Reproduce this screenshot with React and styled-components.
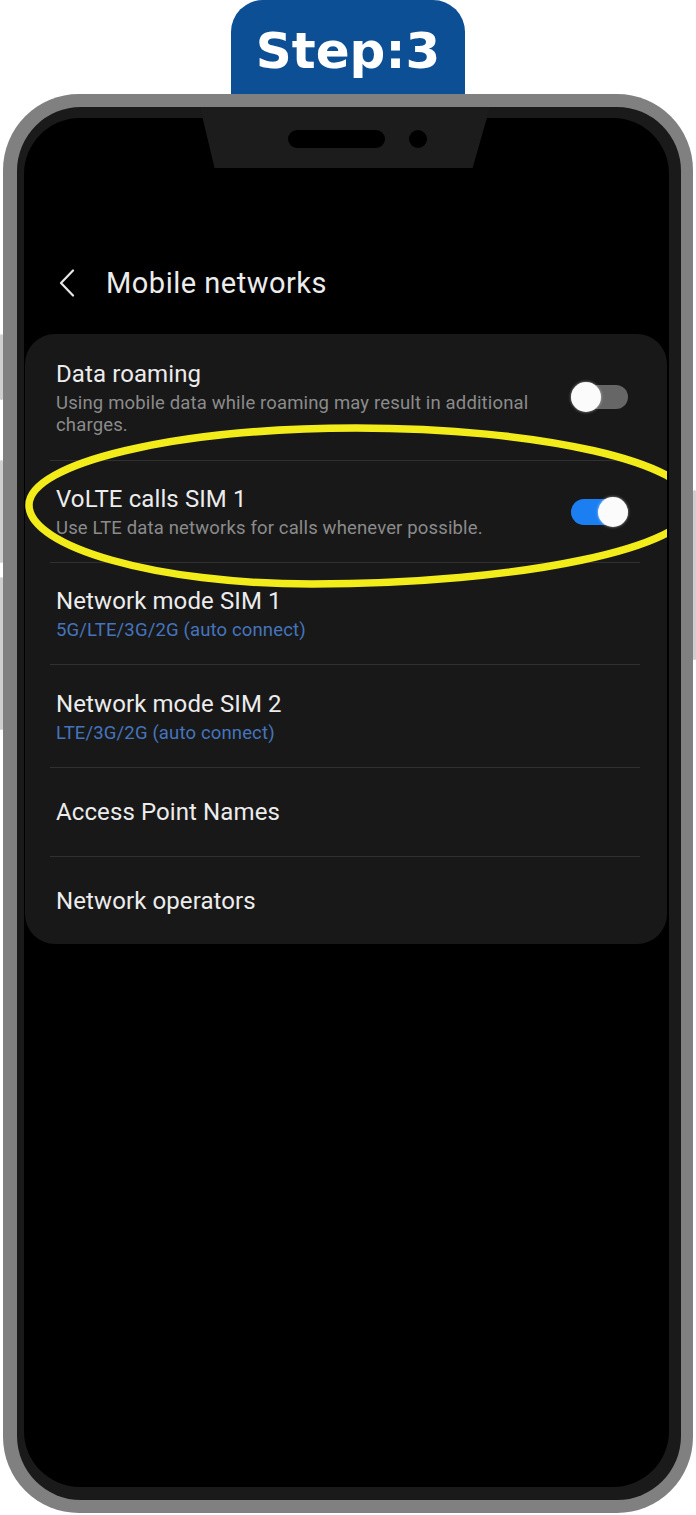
import React from "react";
import styled, { createGlobalStyle } from "styled-components";

const GlobalStyle = createGlobalStyle`
  body {
    margin: 0;
    background: #ffffff;
    font-family: Roboto, "Noto Sans", sans-serif;
  }
`;

const Page = styled.div`
  width: 696px;
  height: 1515px;
  display: flex;
  flex-direction: column;
  align-items: center;
  position: relative;
  overflow: hidden;
`;

const Badge = styled.div`
  width: 234px;
  height: 94px;
  box-sizing: border-box;
  padding-top: 8px;
  background: #0c4f95;
  border-radius: 32px 32px 0 0;
  display: flex;
  align-items: center;
  justify-content: center;
  color: #ffffff;
  font-family: "DejaVu Sans", Verdana, sans-serif;
  font-weight: 700;
  font-size: 50px;
`;

const Phone = styled.div`
  width: 690px;
  height: 1419px;
  box-sizing: border-box;
  padding: 13px 12px 13px 14px;
  background: #808080;
  border-radius: 76px;
  display: flex;
  position: relative;
`;

const SideButton = styled.div`
  position: absolute;
  width: 3px;
  top: ${(p) => p.top}px;
  height: ${(p) => p.len}px;
  ${(p) => (p.right ? "right: -3px;" : "left: -3px;")}
  background: #cfcfcf;
  border-radius: 2px;
`;

const Bezel = styled.div`
  flex: 1;
  display: flex;
  padding: 11px 12px 13px 7px;
  background: #1a1a1a;
  border-radius: 64px;
  position: relative;
`;

const Notch = styled.div`
  position: absolute;
  top: 0;
  left: 183px;
  width: 290px;
  height: 61px;
  box-sizing: border-box;
  padding: 23px 0 0 88px;
  display: flex;
  align-items: flex-start;
  gap: 24px;
  background: #1c1c1c;
  clip-path: polygon(0 0, 100% 0, 94% 100%, 5% 100%);
  z-index: 2;
`;

const Speaker = styled.div`
  width: 97px;
  height: 18px;
  border-radius: 9px;
  background: #000;
`;

const Camera = styled.div`
  width: 18px;
  height: 18px;
  border-radius: 50%;
  background: #000;
`;

const Screen = styled.div`
  flex: 1;
  background: #000;
  border-radius: 56px;
  padding-top: 135px;
  display: flex;
  flex-direction: column;
`;

const Header = styled.div`
  height: 60px;
  display: flex;
  align-items: center;
  padding-left: 35px;
  gap: 31px;
  color: #ececec;
  font-size: 29px;
  letter-spacing: 0.5px;
`;

const Card = styled.div`
  width: 642px;
  height: 610px;
  margin: 21px 2px 0 1px;
  background: #181818;
  border-radius: 30px;
  display: flex;
  flex-direction: column;
  position: relative;
  overflow: hidden;
`;

const Row = styled.div`
  height: ${(p) => p.h}px;
  box-sizing: border-box;
  padding: 0 39px 0 31px;
  display: flex;
  align-items: center;
  gap: 24px;
`;

const Texts = styled.div`
  flex: 1;
  display: flex;
  flex-direction: column;
  gap: 3px;
`;

const Title = styled.div`
  color: #ececec;
  font-size: 24px;
  line-height: 30px;
  letter-spacing: 0.1px;
`;

const Sub = styled.div`
  color: ${(p) => (p.blue ? "#4574bd" : "#8b8b8b")};
  font-size: 18.5px;
  line-height: 22px;
  letter-spacing: 0.15px;
`;

const Divider = styled.div`
  height: 1px;
  margin: 0 27px 0 25px;
  background: #303030;
`;

const Track = styled.div`
  width: 57px;
  height: ${(p) => (p.on ? 26 : 24)}px;
  border-radius: 13px;
  display: flex;
  align-items: center;
  justify-content: ${(p) => (p.on ? "flex-end" : "flex-start")};
  background: ${(p) => (p.on ? "#1b7ff2" : "#666666")};
  flex-shrink: 0;
`;

const Knob = styled.div`
  width: 30px;
  height: 30px;
  border-radius: 50%;
  background: #fbfbfb;
  box-shadow: 0 0 3px rgba(255, 255, 255, 0.6);
`;

const Circle = styled.svg`
  position: absolute;
  left: 0;
  top: 0;
  width: 642px;
  height: 610px;
  pointer-events: none;
`;

const Toggle = ({ on }) => (
  <Track on={on ? 1 : 0}>
    <Knob />
  </Track>
);

const rows = [
  {
    h: 126,
    title: "Data roaming",
    sub: "Using mobile data while roaming may result in additional charges.",
    toggle: "off",
  },
  {
    h: 102,
    title: "VoLTE calls SIM 1",
    sub: "Use LTE data networks for calls whenever possible.",
    toggle: "on",
  },
  { h: 102, title: "Network mode SIM 1", sub: "5G/LTE/3G/2G (auto connect)", blue: true },
  { h: 103, title: "Network mode SIM 2", sub: "LTE/3G/2G (auto connect)", blue: true },
  { h: 89, title: "Access Point Names" },
  { h: 88, title: "Network operators" },
];

const App = () => {
  return (
    <Page>
      <GlobalStyle />
      <Badge>Step:3</Badge>
      <Phone>
        <SideButton top={240} len={66} />
        <SideButton top={366} len={103} />
        <SideButton top={483} len={153} />
        <SideButton right top={396} len={170} />
        <Bezel>
          <Notch>
            <Speaker />
            <Camera />
          </Notch>
          <Screen>
            <Header>
              <svg width="16" height="28" viewBox="0 0 16 28">
                <polyline
                  points="14,1.5 2,14 14,26.5"
                  fill="none"
                  stroke="#e6e6e6"
                  strokeWidth="2.2"
                  strokeLinecap="round"
                  strokeLinejoin="round"
                />
              </svg>
              Mobile networks
            </Header>
            <Card>
              {rows.map((r, i) => (
                <React.Fragment key={r.title}>
                  {i > 0 && <Divider />}
                  <Row h={r.h - (i > 0 ? 1 : 0)}>
                    <Texts>
                      <Title>{r.title}</Title>
                      {r.sub && <Sub blue={r.blue}>{r.sub}</Sub>}
                    </Texts>
                    {r.toggle && <Toggle on={r.toggle === "on"} />}
                  </Row>
                </React.Fragment>
              ))}
              <Circle viewBox="0 0 642 610">
                <path
                  d="M4 171 C4 129 151 94 331 94 C516 94 668 129 668 171 C668 213 496 250 287 250 C131 250 4 213 4 171 Z"
                  fill="none"
                  stroke="#f3ec1b"
                  strokeWidth="7.5"
                />
              </Circle>
            </Card>
          </Screen>
        </Bezel>
      </Phone>
    </Page>
  );
};

export default App;
